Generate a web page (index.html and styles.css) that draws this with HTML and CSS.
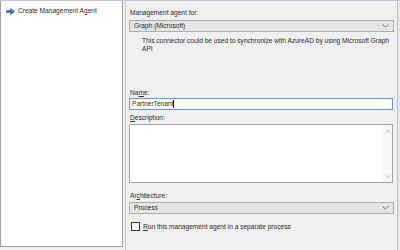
FILE: index.html
```html
<!DOCTYPE html>
<html>
<head>
<meta charset="utf-8">
<link rel="stylesheet" href="styles.css">
</head>
<body>
<div class="window">
  <div class="nav">
    <div class="nav-item">
      <svg class="arrow" width="9" height="7" viewBox="0 0 9 7"><path d="M0.5 2.5H4.5V0.5L8.5 3.5L4.5 6.5V4.5H0.5Z" fill="#3b78c4" stroke="#2a5ea8" stroke-width="0.6"/></svg>
      <span>Create Management Agent</span>
    </div>
  </div>
  <div class="sep"></div>
  <div class="pane">
    <div class="label first">Management agent for:</div>
    <div class="select">
      <span>Graph (Microsoft)</span>
      <svg class="chev" width="7" height="4" viewBox="0 0 7 4"><path d="M0.5 0.5L3.5 3L6.5 0.5" fill="none" stroke="#6a6a6a" stroke-width="0.9"/></svg>
    </div>
    <div class="info">This connector could be used to synchronize with AzureAD by using Microsoft Graph API</div>
    <div class="label name-label">Na<u>m</u>e:</div>
    <div class="input"><span>PartnerTenant</span><span class="caret"></span></div>
    <div class="label desc-label"><u>D</u>escription:</div>
    <div class="textarea">
      <div class="scroll">
        <svg width="6" height="4" viewBox="0 0 6 4"><path d="M0.5 3.5L3 1L5.5 3.5" fill="none" stroke="#b8b8b8" stroke-width="0.9"/></svg>
        <svg width="6" height="4" viewBox="0 0 6 4"><path d="M0.5 0.5L3 3L5.5 0.5" fill="none" stroke="#b8b8b8" stroke-width="0.9"/></svg>
      </div>
    </div>
    <div class="label arch-label">Ar<u>c</u>hitecture:</div>
    <div class="select select2">
      <span>Process</span>
      <svg class="chev" width="7" height="4" viewBox="0 0 7 4"><path d="M0.5 0.5L3.5 3L6.5 0.5" fill="none" stroke="#6a6a6a" stroke-width="0.9"/></svg>
    </div>
    <div class="check-row">
      <span class="box"></span>
      <span><u>R</u>un this management agent in a separate process</span>
    </div>
  </div>
  <div class="edge"></div>
</div>
</body>
</html>
```
FILE: styles.css
```css
html, body {
  margin: 0;
  padding: 0;
  background: #f0f0f0;
  font-family: "Liberation Sans", Arial, sans-serif;
  font-size: 6.6px;
  color: #2b2b2b;
}
.window {
  width: 400px;
  height: 250px;
  display: flex;
  border-top: 1px solid #bcc6d4;
  box-sizing: border-box;
}
.nav {
  width: 121px;
  height: 245px;
  background: #fff;
  border: 1px solid #a0a0a0;
  border-top: none;
  flex: none;
}
.nav-item {
  display: flex;
  align-items: center;
  gap: 3px;
  padding: 6px 0 0 5px;
  line-height: 8px;
}
.arrow { flex: none; }
.sep {
  width: 2px;
  flex: none;
}
.pane {
  flex: 1;
  border-left: 1px solid #c9c9c9;
  padding: 0 3px 0 3px;
  display: flex;
  flex-direction: column;
}
.label {
  line-height: 8px;
  height: 8px;
  padding-left: 1px;
}
.label u, .check-row u { text-decoration: underline; text-underline-offset: 1px; }
.first { margin-top: 8px; }
.select {
  margin-top: 3px;
  height: 10px;
  border: 1px solid #adadad;
  background: #e5e5e5;
  display: flex;
  align-items: center;
  justify-content: space-between;
  padding: 0 4px 0 4px;
  line-height: 10px;
}
.chev { flex: none; }
.info {
  margin-top: 5px;
  padding-left: 13px;
  padding-right: 4px;
  line-height: 8px;
}
.name-label { margin-top: 36px; }
.input {
  margin-top: 1px;
  height: 10px;
  border: 1px solid #569de5;
  background: #fff;
  display: flex;
  align-items: center;
  padding-left: 2px;
  line-height: 10px;
  margin-right: 1px;
}
.caret {
  width: 1px;
  height: 8px;
  background: #000;
}
.desc-label { margin-top: 4px; }
.textarea {
  margin-top: 2px;
  height: 57px;
  border: 1px solid #a6a6a6;
  background: #fff;
  display: flex;
  justify-content: flex-end;
  margin-right: 1px;
}
.scroll {
  width: 9px;
  background: #f7f7f7;
  display: flex;
  flex-direction: column;
  justify-content: space-between;
  align-items: center;
  padding: 4px 0 3px;
}
.arch-label { margin-top: 9px; }
.select2 { margin-top: 2px; }
.check-row {
  margin-top: 8px;
  display: flex;
  align-items: center;
  gap: 3px;
  padding-left: 2px;
  line-height: 8px;
}
.box {
  width: 7px;
  height: 7px;
  border: 1px solid #3a3a3a;
  background: #fff;
  flex: none;
}
.edge {
  width: 2px;
  flex: none;
  border-left: 1px solid #c0c0c0;
  background: #e8e8e8;
}
```
